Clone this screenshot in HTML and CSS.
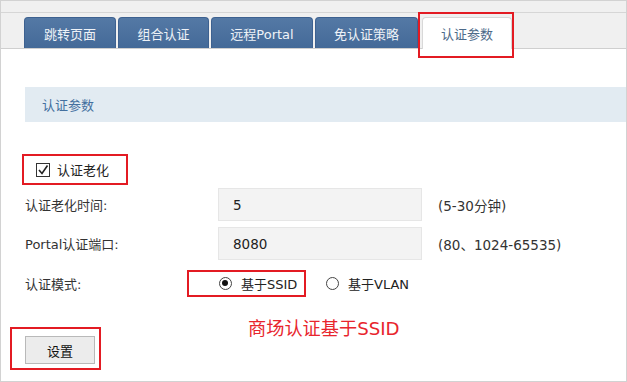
FILE: index.html
```html
<!DOCTYPE html>
<html>
<head>
<meta charset="utf-8">
<link rel="stylesheet" href="styles.css">
</head>
<body>
<div class="frame">
  <div class="topstrip"></div>
  <div class="tabbar">
    <div class="tab t1">跳转页面</div>
    <div class="tab t2">组合认证</div>
    <div class="tab t3">远程Portal</div>
    <div class="tab t4">免认证策略</div>
    <div class="tab active">认证参数</div>
  </div>
  <div class="content">
    <div class="band">认证参数</div>
    <div class="check-wrap">
      <label class="check">
        <svg width="14" height="14" viewBox="0 0 14 14"><rect x="0.5" y="0.5" width="13" height="13" fill="#fff" stroke="#333"/><path d="M3 7 L6 10.5 L11.5 2.5" fill="none" stroke="#222" stroke-width="1.6"/></svg>
        <span>认证老化</span>
      </label>
    </div>
    <div class="form">
      <div class="lbl">认证老化时间:</div>
      <div class="input">5</div>
      <div class="hint">(5-30分钟)</div>
      <div class="lbl">Portal认证端口:</div>
      <div class="input">8080</div>
      <div class="hint">(80、1024-65535)</div>
    </div>
    <div class="mode">
      <div class="lbl mode-lbl">认证模式:</div>
      <div class="radio-box">
        <span class="radio on"></span><span>基于SSID</span>
      </div>
      <div class="radio-plain">
        <span class="radio"></span><span>基于VLAN</span>
      </div>
    </div>
    <div class="btn-box"><div class="btn">设置</div></div>
  </div>
  <div class="note">商场认证基于SSID</div>
</div>
</body>
</html>
```
FILE: styles.css
```css
* { box-sizing: border-box; }
html, body { margin: 0; padding: 0; background: #fff; }
body {
  width: 627px; height: 382px; overflow: hidden;
  font-family: "DejaVu Sans", "Noto Sans CJK SC", sans-serif;
  font-size: 13px; color: #333;
}
.frame {
  position: relative;
  width: 627px; height: 382px;
  border: 1px solid #d2d2d2;
}
.topstrip { height: 12px; background: #f0f0f0; border-bottom: 1px solid #d6d6d6; }
.tabbar {
  height: 36px; background: #f0f0f0; border-bottom: 1px solid #cfcfcf;
  display: flex; align-items: flex-end; padding-left: 23px;
}
.tab {
  height: 31px; margin-right: 2px;
  border-radius: 4px 4px 0 0;
  background: linear-gradient(#5479a5, #446a98);
  border: 1px solid #3d6190; border-bottom: none;
  color: #eef2f7; display: flex; align-items: center; justify-content: center;
  font-family: "Noto Sans CJK SC", sans-serif; font-size: 13px;
}
.t1 { width: 92px; }
.t2 { width: 91px; }
.t3 { width: 102px; font-family: "DejaVu Sans", "Noto Sans CJK SC", sans-serif; }
.t4 { width: 103px; }
.tab.active {
  position: relative; width: 90px; height: 32px; margin-left: 2px; margin-bottom: -1px;
  background: #fff; border: 1px solid #d8d8d8; border-bottom: none;
  color: #4d6a89;
}
.tab.active::after {
  content: ""; position: absolute; left: -5px; top: -6px; right: -3px; bottom: -9px;
  border: 2px solid #e31b23;
}
.content { padding-left: 24px; }
.band {
  margin-top: 38px; height: 35px; background: #e2ebf2;
  padding-left: 17px; display: flex; align-items: center;
  color: #44709f; font-family: "Noto Sans CJK SC", sans-serif; font-size: 13px;
}
.check-wrap { margin-top: 32px; margin-left: -3px; }
.check {
  display: inline-flex; align-items: center; gap: 7px;
  width: 106px; height: 31px; border: 2px solid #e31b23; padding-left: 12px;
  font-family: "Noto Sans CJK SC", sans-serif; font-size: 13px; color: #222;
}
.form {
  margin-top: 3px;
  display: grid; grid-template-columns: 193px 204px auto; row-gap: 6px;
  align-items: center;
}
.lbl { font-family: "DejaVu Sans", "Noto Sans CJK SC", sans-serif; font-size: 13px; color: #333; }
.input {
  height: 33px; background: #f3f3f3; border: 1px solid #e6e6e6;
  display: flex; align-items: center; padding-left: 14px; color: #222; font-size: 13.5px;
}
.hint { padding-left: 16px; color: #333; font-size: 13.5px; }
.mode { margin-top: 10px; display: flex; align-items: center; height: 27px; }
.mode-lbl { width: 162px; }
.radio-box {
  width: 119px; height: 27px; border: 2px solid #e31b23;
  display: flex; align-items: center; padding-left: 30px; gap: 9px;
  font-size: 13px; color: #222;
}
.radio-plain { display: flex; align-items: center; gap: 9px; margin-left: 20px; font-size: 13px; color: #222; }
.radio {
  width: 13px; height: 13px; border-radius: 50%; border: 1.5px solid #444; background: #fff;
  display: inline-block; position: relative;
}
.radio.on::after {
  content: ""; position: absolute; left: 2px; top: 2px; width: 6px; height: 6px; border-radius: 50%; background: #111;
}
.btn-box {
  margin-top: 30px; margin-left: -15px;
  width: 91px; height: 43px; border: 2px solid #e31b23;
  padding: 7px 0 0 13px;
}
.btn {
  width: 70px; height: 28px; background: #ececec; border: 1px solid #b9b9b9;
  display: flex; align-items: center; justify-content: center;
  font-family: "Noto Sans CJK SC", sans-serif; font-size: 13px; color: #111;
}
.note {
  position: absolute; left: 247px; top: 313px;
  color: #e8252d; font-family: "DejaVu Sans", "Noto Sans CJK SC", sans-serif; font-size: 18.2px;
}
```
